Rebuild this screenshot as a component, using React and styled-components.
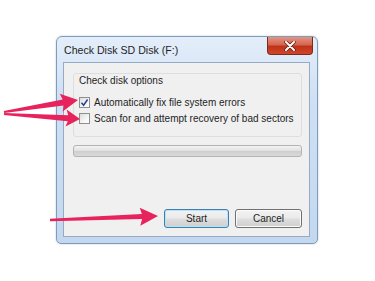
import React from 'react';
import styled, { createGlobalStyle } from 'styled-components';

const GlobalStyle = createGlobalStyle`
  html, body {
    margin: 0;
    padding: 0;
    background: #ffffff;
  }
  body {
    font-family: "Liberation Sans", Arial, sans-serif;
  }
`;

const Page = styled.div`
  position: relative;
  width: 375px;
  height: 281px;
  overflow: hidden;
  padding: 36px 0 0 56px;
  box-sizing: border-box;
`;

const Window = styled.div`
  width: 262px;
  height: 208px;
  box-sizing: border-box;
  border: 1px solid #7f9bbd;
  border-radius: 6px 6px 5px 5px;
  background: linear-gradient(180deg, #e4eefa 0%, #cfe0f3 30%, #c3d8ef 100%);
  display: flex;
  flex-direction: column;
  box-shadow: 0 0 2px rgba(60, 90, 130, 0.35);
`;

const TitleBar = styled.div`
  height: 25px;
  display: flex;
  align-items: flex-start;
  justify-content: space-between;
  padding: 0 4px 0 7px;
`;

const Title = styled.span`
  margin-top: 6px;
  font-size: 10.6px;
  line-height: 14px;
  color: #1e1e1e;
  white-space: nowrap;
`;

const CloseButton = styled.div`
  width: 46px;
  height: 18px;
  box-sizing: border-box;
  border: 1px solid #7a2a1e;
  border-top: none;
  border-radius: 0 0 4px 4px;
  background: linear-gradient(180deg, #e39583 0%, #d4664f 45%, #bf3219 55%, #d1462b 100%);
  display: flex;
  align-items: center;
  justify-content: center;
`;

const Client = styled.div`
  flex: 1;
  margin: 0 7px 6px 6px;
  box-sizing: border-box;
  border: 1px solid #97aac4;
  background: #f0f0f0;
  padding: 10px 7px 0 9px;
  display: flex;
  flex-direction: column;
`;

const GroupBox = styled.div`
  border: 1px solid #dcdfe2;
  border-radius: 3px;
  height: 64px;
  box-sizing: border-box;
  padding: 1px 0 0 5px;
  display: flex;
  flex-direction: column;
`;

const GroupLabel = styled.span`
  font-size: 10px;
  line-height: 12px;
  color: #1e1e1e;
  margin-bottom: 7px;
  white-space: nowrap;
`;

const OptionRow = styled.label`
  display: flex;
  align-items: center;
  gap: 4px;
  height: 16px;
  font-size: 10px;
  color: #1e1e1e;
  white-space: nowrap;
`;

const Check = styled.span`
  width: 11px;
  height: 11px;
  flex: none;
  box-sizing: border-box;
  border: 1px solid #8e8f8f;
  background: linear-gradient(135deg, #dcdcdc 0%, #f6f6f6 60%, #ffffff 100%);
  display: flex;
  align-items: center;
  justify-content: center;
`;

const Progress = styled.div`
  margin-top: 8px;
  height: 12px;
  box-sizing: border-box;
  border: 1px solid #b4b4b4;
  border-radius: 3px;
  background: linear-gradient(180deg, #f3f3f3 0%, #e2e2e2 45%, #cfcfcf 55%, #dadada 100%);
`;

const ButtonRow = styled.div`
  margin-top: auto;
  margin-bottom: 8px;
  display: flex;
  justify-content: flex-end;
  gap: 6px;
`;

const Button = styled.div`
  width: ${p => p.$w}px;
  height: 19px;
  box-sizing: border-box;
  border: 1px solid ${p => (p.$focus ? '#3c7fb1' : '#707070')};
  border-radius: 3px;
  background: linear-gradient(180deg, #f2f2f2 0%, #ebebeb 45%, #dddddd 55%, #cfcfcf 100%);
  box-shadow: inset 0 0 0 1px ${p => (p.$focus ? '#b8e2f6' : '#fbfbfb')};
  font-size: 10px;
  color: #1e1e1e;
  display: flex;
  align-items: center;
  justify-content: center;
`;

const Overlay = styled.svg`
  position: absolute;
  left: 0;
  top: 0;
  pointer-events: none;
`;

const arrowPoints = (tx, ty, px, py, headLen, headW, tailW, neckW) => {
  const dx = px - tx;
  const dy = py - ty;
  const len = Math.hypot(dx, dy);
  const ux = dx / len;
  const uy = dy / len;
  const nx = -uy;
  const ny = ux;
  const bx = px - ux * headLen;
  const by = py - uy * headLen;
  const pts = [
    [tx + nx * tailW / 2, ty + ny * tailW / 2],
    [bx + nx * neckW / 2, by + ny * neckW / 2],
    [bx + nx * headW / 2 - ux * 2, by + ny * headW / 2 - uy * 2],
    [px, py],
    [bx - nx * headW / 2 - ux * 2, by - ny * headW / 2 - uy * 2],
    [bx - nx * neckW / 2, by - ny * neckW / 2],
    [tx - nx * tailW / 2, ty - ny * tailW / 2],
  ];
  return pts.map(p => p.map(v => v.toFixed(1)).join(',')).join(' ');
};

const arrows = [
  [4, 112, 78, 100, 15, 18, 2, 6],
  [4, 114, 80, 119, 12, 17, 2, 6],
  [50, 220, 158, 216, 16, 18, 2.5, 5],
];

export default function App() {
  return (
    <>
      <GlobalStyle />
      <Page>
        <Window>
          <TitleBar>
            <Title>Check Disk SD Disk (F:)</Title>
            <CloseButton>
              <svg width="12" height="10" viewBox="0 0 12 10">
                <path d="M2 1 L10 9 M10 1 L2 9" stroke="#5a1a10" strokeWidth="3.4" strokeLinecap="round" />
                <path d="M2 1 L10 9 M10 1 L2 9" stroke="#ffffff" strokeWidth="2" strokeLinecap="round" />
              </svg>
            </CloseButton>
          </TitleBar>
          <Client>
            <GroupBox>
              <GroupLabel>Check disk options</GroupLabel>
              <OptionRow>
                <Check>
                  <svg width="9" height="9" viewBox="0 0 9 9">
                    <path d="M1.5 4.8 L3.6 7.2 L7.6 1.5" fill="none" stroke="#2a3f8f" strokeWidth="1.5" />
                  </svg>
                </Check>
                Automatically fix file system errors
              </OptionRow>
              <OptionRow>
                <Check />
                Scan for and attempt recovery of bad sectors
              </OptionRow>
            </GroupBox>
            <Progress />
            <ButtonRow>
              <Button $w={65} $focus>Start</Button>
              <Button $w={67}>Cancel</Button>
            </ButtonRow>
          </Client>
        </Window>
        <Overlay width="375" height="281" viewBox="0 0 375 281">
          {arrows.map((a, i) => (
            <polygon key={i} points={arrowPoints(...a)} fill="#e8225c" />
          ))}
        </Overlay>
      </Page>
    </>
  );
}
